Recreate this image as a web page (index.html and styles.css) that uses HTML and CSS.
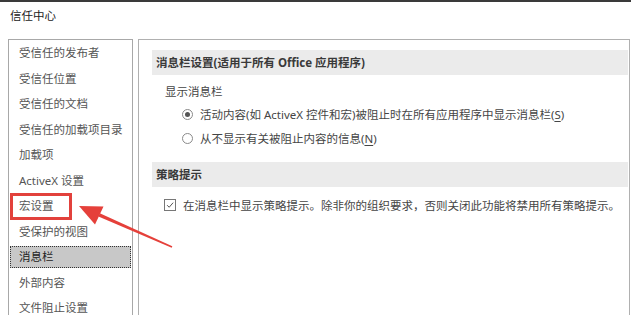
FILE: index.html
```html
<!DOCTYPE html>
<html lang="zh-CN">
<head>
<meta charset="utf-8">
<title>信任中心</title>
<link rel="stylesheet" href="styles.css">
</head>
<body>
<div class="topbar"></div>
<div class="title">信任中心</div>
<div class="main">
  <nav class="nav">
    <div class="item">受信任的发布者</div>
    <div class="item">受信任位置</div>
    <div class="item">受信任的文档</div>
    <div class="item">受信任的加载项目录</div>
    <div class="item">加载项</div>
    <div class="item">ActiveX 设置</div>
    <div class="item marked">宏设置<span class="annot"></span></div>
    <div class="item">受保护的视图</div>
    <div class="item selected">消息栏</div>
    <div class="item">外部内容</div>
    <div class="item">文件阻止设置</div>
  </nav>
  <section class="panel">
    <div class="band">消息栏设置(适用于所有 Office 应用程序)</div>
    <div class="label">显示消息栏</div>
    <div class="opt"><span class="radio on"></span><span>活动内容(如 ActiveX 控件和宏)被阻止时在所有应用程序中显示消息栏(<u>S</u>)</span></div>
    <div class="opt"><span class="radio"></span><span>从不显示有关被阻止内容的信息(<u>N</u>)</span></div>
    <div class="band band2">策略提示</div>
    <div class="check"><span class="box"><svg width="12" height="12" viewBox="0 0 12 12"><path d="M2.5 6.2 L5 8.7 L9.8 3.2" fill="none" stroke="#555" stroke-width="1.2"/></svg></span><span>在消息栏中显示策略提示。除非你的组织要求，否则关闭此功能将禁用所有策略提示。</span></div>
  </section>
</div>
<svg class="arrow" width="631" height="315" viewBox="0 0 631 315">
  <polygon points="79,206 103.5,206.5 95,224.5" fill="#e5403a"/>
  <polygon points="98.4,216.5 99.8,213.3 172.3,246.3 171.7,247.7" fill="#e5403a"/>
</svg>
</body>
</html>
```
FILE: styles.css
```css
* { box-sizing: border-box; }
html, body { margin: 0; padding: 0; }
body {
  width: 631px;
  height: 315px;
  overflow: hidden;
  background: #fff;
  font-family: "Noto Sans", "Noto Sans CJK SC", sans-serif;
  font-size: 11.5px;
  color: #454545;
  position: relative;
}
.topbar { height: 2px; background: #3a3a3a; }
.title {
  height: 37px;
  line-height: 28px;
  padding-left: 10px;
  color: #222;
}
.main {
  display: flex;
  gap: 5px;
  padding: 0 1px 0 8px;
  height: 276px;
}
.nav {
  width: 125px;
  flex: none;
  border: 1px solid #a8a8a8;
  border-bottom: none;
  padding-top: 2px;
}
.item {
  position: relative;
  height: 22px;
  line-height: 22px;
  margin: 0 1px 3.5px 1px;
  padding-left: 9px;
  color: #555;
  white-space: nowrap;
}
.item.selected {
  background: #c8c8c8;
  outline: 1px dotted #333;
  outline-offset: -1px;
  color: #222;
}
.annot {
  position: absolute;
  left: 0;
  top: -2px;
  width: 62px;
  height: 27px;
  border: 3px solid #e2413c;
}
.panel {
  flex: 1;
  border: 1px solid #b0b0b0;
  border-bottom: none;
  padding: 10px 1px 0 13px;
}
.band {
  height: 25px;
  line-height: 25px;
  background: #ebebeb;
  padding-left: 4px;
  font-weight: bold;
  color: #3a3a3a;
}
.band2 { margin-top: 12px; }
.label {
  margin-top: 7px;
  height: 20px;
  line-height: 20px;
  padding-left: 13px;
}
.opt {
  display: flex;
  align-items: center;
  gap: 7px;
  height: 24px;
  padding-left: 30px;
  white-space: nowrap;
}
.radio {
  width: 11px;
  height: 11px;
  border: 1px solid #8a8a8a;
  border-radius: 50%;
  flex: none;
  display: flex;
  align-items: center;
  justify-content: center;
  background: #fff;
}
.radio.on::after {
  content: "";
  width: 5px;
  height: 5px;
  border-radius: 50%;
  background: #555;
}
.check {
  margin-top: 6px;
  display: flex;
  align-items: center;
  gap: 7px;
  height: 24px;
  padding-left: 12px;
  white-space: nowrap;
}
.box {
  width: 12px;
  height: 12px;
  border: 1px solid #777;
  flex: none;
  display: flex;
  align-items: center;
  justify-content: center;
  background: #fff;
}
.box svg { display: block; }
u { text-underline-offset: 2px; }
.arrow {
  position: absolute;
  left: 0;
  top: 0;
  pointer-events: none;
}
```
